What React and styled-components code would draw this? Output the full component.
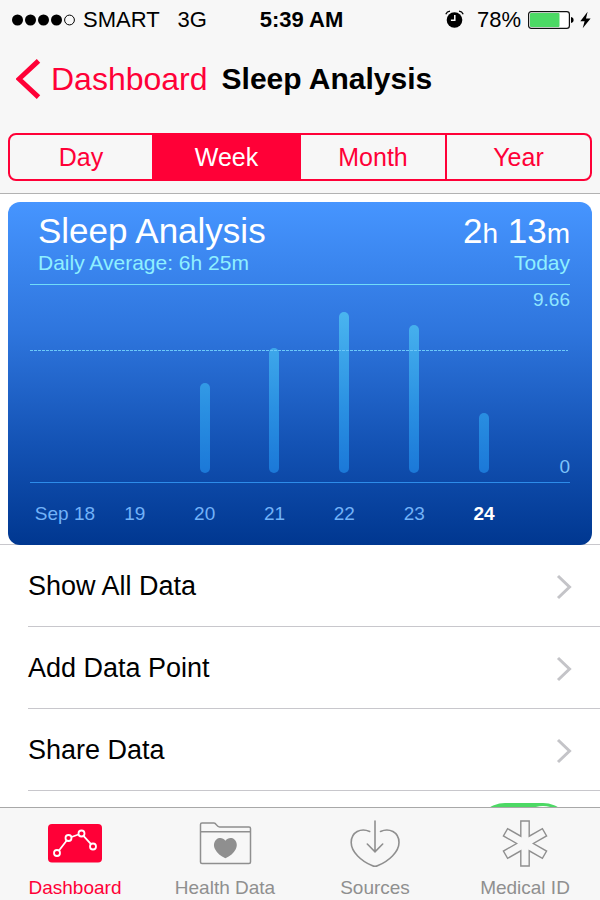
import React, { useState } from 'react'
import styled, { createGlobalStyle } from 'styled-components'

const RED = '#ff0037';
const GRAY = '#8f8f8f';

const days = [
    { label: 'Sep 18', height: 0 },
    { label: '19', height: 0 },
    { label: '20', height: 90 },
    { label: '21', height: 125 },
    { label: '22', height: 161 },
    { label: '23', height: 148 },
    { label: '24', height: 60, today: true },
];

const ranges = ['Day', 'Week', 'Month', 'Year'];

const links = ['Show All Data', 'Add Data Point', 'Share Data'];

const SignalDots = () => (
    <svg width="63" height="12" viewBox="0 0 63 12" aria-hidden="true">
        <circle cx="5.5" cy="6" r="5.5" />
        <circle cx="18.5" cy="6" r="5.5" />
        <circle cx="31.5" cy="6" r="5.5" />
        <circle cx="44.5" cy="6" r="5.5" />
        <circle cx="57.5" cy="6" r="4.9" fill="none" stroke="#000" strokeWidth="1" />
    </svg>
);

const AlarmIcon = () => (
    <svg width="20" height="20" viewBox="0 0 20 20" aria-hidden="true">
        <circle cx="9.5" cy="10" r="7.8" />
        <path d="M.8 4.200C1.600 2.400 3 1.500 5 1.200M18.200 4.200C17.400 2.400 16 1.500 14 1.200" fill="none" stroke="#000" strokeWidth="1.300" />
        <path d="M9.800 5v5.200H5.900" fill="none" stroke="#fff" strokeWidth="1.500" />
    </svg>
);

const BatteryIcon = () => (
    <svg width="46" height="18" viewBox="0 0 46 18" aria-hidden="true">
        <rect x="0.6" y="0.6" width="40.8" height="16.8" rx="2.6" fill="#fff" stroke="#111" strokeWidth="1.2" />
        <rect x="2" y="2" width="29.5" height="14" rx="1" fill="#4cd964" />
        <path d="M43 6c1.9.4 2.6 1.4 2.6 3s-.7 2.600-2.600 3z" />
    </svg>
);

const BoltIcon = () => (
    <svg width="11" height="18" viewBox="0 0 11 18" aria-hidden="true">
        <path d="M7.600.8L.3 10.200h4.300L2.700 17.300 10.600 7.500H6z" />
    </svg>
);

const BackIcon = () => (
    <svg width="25" height="40" viewBox="0 0 25 40" aria-hidden="true">
        <path d="M22.500 1.800L3 20l19.500 18.200" fill="none" stroke={RED} strokeWidth="5" />
    </svg>
);

const Chevron = () => (
    <svg width="16" height="26" viewBox="0 0 16 26" aria-hidden="true">
        <path d="M2 2l11.500 11L2 24" fill="none" stroke="#c4c4c8" strokeWidth="3" />
    </svg>
);

const DashboardIcon = () => (
    <svg width="56" height="48" viewBox="0 0 56 48" aria-hidden="true">
        <rect x="1" y="4" width="54" height="38.500" rx="4" fill={RED} />
        <g fill="none" stroke="#fff" strokeWidth="1.800">
            <path d="M12 30.500l7.700-10M24.500 17l7-2.500M36.500 15.800l7.500 8.400" />
            <circle cx="10" cy="33" r="3" />
            <circle cx="21.500" cy="18" r="3" />
            <circle cx="34.500" cy="13.500" r="3" />
            <circle cx="46" cy="26.500" r="3" />
        </g>
    </svg>
);

const HealthDataIcon = () => (
    <svg width="56" height="48" viewBox="0 0 56 48" aria-hidden="true">
        <path d="M3.500 42V4.500Q3.500 3 5 3H17c2.500 0 2.500 4 5.500 4H52Q53.500 7 53.500 8.500V42Q53.500 43.500 52 43.500H5Q3.500 43.500 3.500 42zM3.500 11.700h50" fill="none" stroke={GRAY} strokeWidth="1.500" />
        <path d="M28.400 20.800c2.300-3.200 6.500-3.400 9-1.300 2.900 2.500 3 6.700 1.300 9.700-2 3.700-5.600 7-10.300 9.100-4.700-2.100-8.300-5.400-10.300-9.100-1.700-3-1.600-7.200 1.300-9.700 2.500-2.100 6.700-1.900 9 1.300z" fill={GRAY} />
    </svg>
);

const SourcesIcon = () => (
    <svg width="56" height="48" viewBox="0 0 56 48" aria-hidden="true">
        <g fill="none" stroke={GRAY} strokeWidth="1.600" strokeLinecap="round">
            <path d="M22.700 11.500C14 7.500 4.200 12 4.200 22.500c0 9.500 10.300 18.800 20.800 23q3 1.500 6 0c10.500-4.200 21-13.500 21-23C52 12 42 7.500 33.500 11.500" />
            <path d="M28 1v30.500M20.300 24l7.700 7.800 7.700-7.800" />
        </g>
    </svg>
);

const MedicalIcon = () => (
    <svg width="56" height="48" viewBox="-28 -23.500 56 48" aria-hidden="true">
        <path d="M-4.200-22.500H4.200V-7.270L17.390-14.890 21.590-7.610 8.400 0 21.590 7.610 17.390 14.890 4.200 7.270V22.500H-4.200V7.270L-17.390 14.890-21.590 7.610-8.400 0-21.590-7.610-17.390-14.890-4.200-7.270z" fill="none" stroke={GRAY} strokeWidth="1.400" />
    </svg>
);

const tabs = [
    { label: 'Dashboard', Icon: DashboardIcon },
    { label: 'Health Data', Icon: HealthDataIcon },
    { label: 'Sources', Icon: SourcesIcon },
    { label: 'Medical ID', Icon: MedicalIcon },
];

const App = () => {
    const [range, setRange] = useState('Week');
    const [shown, setShown] = useState(true);

    return (
        <Screen>
            <GlobalStyle />
            <Header>
                <StatusBar>
                    <StatusGroup>
                        <SignalDots />
                        <Carrier>SMART</Carrier>
                        <span>3G</span>
                    </StatusGroup>
                    <Clock>5:39 AM</Clock>
                    <StatusGroup $end>
                        <AlarmIcon />
                        <Percent>78%</Percent>
                        <BatteryIcon />
                        <BoltIcon />
                    </StatusGroup>
                </StatusBar>
                <NavBar>
                    <BackLink href="#dashboard">
                        <BackIcon />
                        Dashboard
                    </BackLink>
                    <NavTitle>Sleep Analysis</NavTitle>
                </NavBar>
                <Segments>
                    {ranges.map((name) => (
                        <Segment key={name} $active={name === range} aria-pressed={name === range} onClick={() => setRange(name)}>
                            {name}
                        </Segment>
                    ))}
                </Segments>
            </Header>

            <Content>
                <CardPanel>
                    <Card>
                        <CardHeader>
                            <CardTitle>Sleep Analysis</CardTitle>
                            <CardTitle as="div">2<Unit>h</Unit> 13<Unit>m</Unit></CardTitle>
                            <CardNote>Daily Average: 6h 25m</CardNote>
                            <CardNote>Today</CardNote>
                        </CardHeader>
                        <Plot>
                            {days.map((day) => (
                                <Bar key={day.label} style={{ height: day.height }} />
                            ))}
                            <Axis>
                                <span>9.66</span>
                                <span>0</span>
                            </Axis>
                            <AverageLine />
                        </Plot>
                        <DayRow>
                            {days.map((day) => (
                                <DayLabel key={day.label} $today={day.today}>{day.label}</DayLabel>
                            ))}
                        </DayRow>
                    </Card>
                </CardPanel>
                <List>
                    {links.map((text) => (
                        <Row key={text}>
                            <RowLink href="#data">
                                {text}
                                <Chevron />
                            </RowLink>
                        </Row>
                    ))}
                    <SwitchRow>
                        <Switch type="checkbox" aria-label="Show on Dashboard" checked={shown} onChange={() => setShown(!shown)} />
                    </SwitchRow>
                </List>
            </Content>

            <TabBar>
                {tabs.map(({ label, Icon }, i) => (
                    <Tab key={label} href="#tab" $active={i === 0}>
                        <Icon />
                        {label}
                    </Tab>
                ))}
            </TabBar>
        </Screen>
    )
}

const GlobalStyle = createGlobalStyle`
* {
    box-sizing: border-box;
}
body {
    margin: 0;
    background: #fff;
    color: #000;
    font-family: 'Liberation Sans', Arial, sans-serif;
}
svg {
    display: block;
    flex-shrink: 0;
}
`;

const Screen = styled.div`
display: flex;
flex-direction: column;
height: 100vh;
`;

const Header = styled.header`
background: #f7f7f7;
border-bottom: 1px solid #b2b2b2;
padding: 0 8px 12px;
`;

const StatusBar = styled.div`
display: grid;
grid-template-columns: 1fr auto 1fr;
align-items: center;
height: 39px;
padding: 0 1px 0 4px;
font-size: 22px;
`;

const StatusGroup = styled.div`
display: flex;
align-items: center;
justify-content: ${(p) => (p.$end ? 'flex-end' : 'flex-start')};
gap: ${(p) => (p.$end ? '6px' : '8px')};
`;

const Carrier = styled.span`
margin-right: 10px;
`;

const Percent = styled.span`
margin: 0 1px 0 6px;
`;

const Clock = styled.div`
font-weight: bold;
`;

const NavBar = styled.nav`
display: flex;
align-items: center;
gap: 14px;
height: 80px;
margin-bottom: 14px;
padding-left: 8px;
`;

const BackLink = styled.a`
display: flex;
align-items: center;
gap: 10px;
color: ${RED};
font-size: 32px;
text-decoration: none;
`;

const NavTitle = styled.h1`
margin: 0;
font-size: 30px;
font-weight: bold;
`;

const Segments = styled.div`
display: grid;
grid-template-columns: 142fr 147fr 146fr 145fr;
height: 48px;
border: 2px solid ${RED};
border-radius: 8px;
overflow: hidden;
`;

const Segment = styled.button`
border: none;
padding: 0;
background: ${(p) => (p.$active ? RED : 'transparent')};
color: ${(p) => (p.$active ? '#fff' : RED)};
font-family: inherit;
font-size: 25px;
cursor: pointer;
& + & {
    border-left: 2px solid ${RED};
}
`;

const Content = styled.main`
flex: 1;
min-height: 0;
overflow: hidden;
`;

const CardPanel = styled.section`
padding: 8px 8px 0;
border-bottom: 1px solid #c8c7cc;
`;

const Card = styled.div`
position: relative;
margin-bottom: -1px;
padding: 9px 22px 0;
border-radius: 12px;
background: linear-gradient(#4695ff 0%, #2e75dd 38%, #1453b5 70%, #003790 100%);
`;

const CardHeader = styled.div`
display: grid;
grid-template-columns: 1fr auto;
padding: 0 0 9px 8px;
border-bottom: 1px solid #70dcf8;
& > :nth-child(even) {
    text-align: right;
}
`;

const CardTitle = styled.h2`
margin: 0;
color: #fff;
font-size: 35px;
font-weight: normal;
line-height: 40px;
`;

const Unit = styled.span`
font-size: 28px;
line-height: 1;
`;

const CardNote = styled.div`
color: #8ff0ff;
font-size: 21px;
line-height: 24px;
`;

const Plot = styled.div`
position: relative;
display: grid;
grid-template-columns: repeat(7, 1fr) 51px;
align-items: end;
justify-items: center;
height: 198px;
padding-bottom: 9px;
border-bottom: 1px solid #2d8cea;
`;

const Bar = styled.div`
width: 10px;
border-radius: 5px;
background: linear-gradient(#4ab5ef, #2a90e2 60%, #1b78d8) bottom / 100% 161px no-repeat;
`;

const Axis = styled.div`
display: flex;
flex-direction: column;
justify-content: space-between;
align-self: stretch;
justify-self: end;
padding-top: 4px;
color: #8fe6ff;
font-size: 19px;
line-height: 22px;
text-align: right;
span:last-child {
    color: #7fc4fa;
    line-height: 12px;
}
`;

const AverageLine = styled.div`
position: absolute;
top: 33%;
left: 0;
right: 2px;
height: 1px;
background: repeating-linear-gradient(90deg, #6cc8f8 0 3px, transparent 3px 4px);
`;

const DayRow = styled.div`
display: grid;
grid-template-columns: repeat(7, 1fr);
align-items: center;
height: 62px;
padding-right: 51px;
`;

const DayLabel = styled.div`
color: ${(p) => (p.$today ? '#fff' : '#72b2f8')};
font-size: 19px;
font-weight: ${(p) => (p.$today ? 'bold' : 'normal')};
text-align: center;
white-space: nowrap;
`;

const List = styled.ul`
margin: 0;
padding: 0 0 0 28px;
list-style: none;
`;

const Row = styled.li`
border-bottom: 1px solid #c8c7cc;
`;

const RowLink = styled.a`
display: flex;
align-items: center;
justify-content: space-between;
height: 81px;
padding: 2px 28px 0 0;
color: #000;
font-size: 27px;
text-decoration: none;
`;

const SwitchRow = styled.li`
display: flex;
justify-content: flex-end;
padding: 12px 28px;
`;

const Switch = styled.input`
appearance: none;
width: 96px;
height: 58px;
margin: 0;
border-radius: 29px;
background: ${(p) => (p.checked ? '#4cd964' : '#e5e5ea')};
cursor: pointer;
&::before {
    content: '';
    display: block;
    width: 52px;
    height: 52px;
    margin: 3px;
    margin-left: ${(p) => (p.checked ? '41px' : '3px')};
    border-radius: 50%;
    background: #fff;
}
`;

const TabBar = styled.nav`
display: grid;
grid-template-columns: repeat(4, 1fr);
padding: 12px 0 1px;
border-top: 1px solid #a8a8a8;
background: #f7f7f7;
`;

const Tab = styled.a`
display: flex;
flex-direction: column;
align-items: center;
gap: 8px;
color: ${(p) => (p.$active ? RED : GRAY)};
font-size: 19px;
line-height: 23px;
text-decoration: none;
`;

export default App
